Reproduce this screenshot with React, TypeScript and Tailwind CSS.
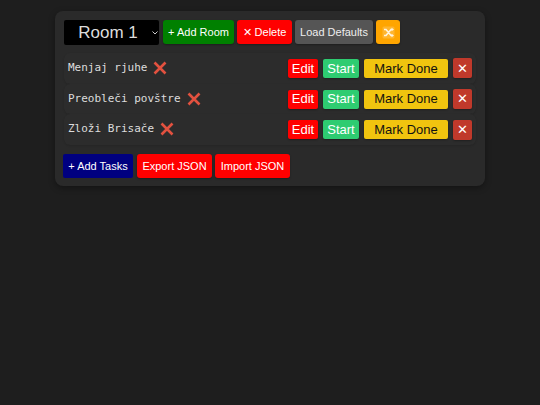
const tasks = ["Menjaj rjuhe", "Preobleči povštre", "Zloži Brisače"];

function RedCross() {
  return (
    <svg width="14" height="14" viewBox="0 0 14 14" className="mt-[-1px] shrink-0">
      <path d="M1.5 1.5 L12.5 12.5 M12.5 1.5 L1.5 12.5" stroke="#e2513f" strokeWidth="2.6" fill="none" />
    </svg>
  );
}

function ShuffleEmoji() {
  return (
    <svg width="13" height="13" viewBox="0 0 13 13">
      <rect x="0.5" y="0.5" width="12" height="12" rx="1.5" fill="#ffb52e" />
      <path d="M2 3.5 H4 L9 9.5 H10.5 M2 9.5 H4 L9 3.5 H10.5" stroke="#fff3dc" strokeWidth="1.7" fill="none" />
      <path d="M9.5 1.8 L12 3.5 L9.5 5.2 Z M9.5 7.8 L12 9.5 L9.5 11.2 Z" fill="#fff3dc" />
    </svg>
  );
}

function TaskRow({ name }: { name: string }) {
  return (
    <div className="flex h-[30.7px] items-center rounded-md bg-[#2c2c2c] pl-[4px] pr-[4px] shadow-[0_1px_2px_rgba(0,0,0,0.12)]">
      <div className="flex flex-1 items-center gap-[6px] font-['DejaVu_Sans_Mono',monospace] text-[11px] text-[#dddddd]">
        <span>{name}</span>
        <RedCross />
      </div>
      <div className="flex items-center gap-[5px] text-[13px]">
        <button className="flex h-[19px] w-[30px] items-center justify-center rounded-[2px] bg-[#ff0000] text-white shadow-[0_1px_2px_rgba(0,0,0,0.3)]">Edit</button>
        <button className="flex h-[19px] w-[36px] items-center justify-center rounded-[2px] bg-[#2ecc71] text-white shadow-[0_1px_2px_rgba(0,0,0,0.3)]">Start</button>
        <button className="flex h-[19px] w-[84px] items-center justify-center rounded-[2px] bg-[#f1c40f] text-[#111111] shadow-[0_1px_2px_rgba(0,0,0,0.3)]">Mark Done</button>
        <button className="flex h-[20px] w-[19px] items-center justify-center rounded-[2px] bg-[#c0392b] text-white shadow-[0_1px_2px_rgba(0,0,0,0.3)]">✕</button>
      </div>
    </div>
  );
}

export default function App() {
  return (
    <div className="min-h-[405px] bg-[#1e1e1e] pt-[11px] font-['Liberation_Sans',sans-serif]">
      <div className="mx-auto flex h-[175px] w-[430px] flex-col rounded-lg bg-[#2a2a2a] px-[9px] pt-[9px] shadow-[0_2px_6px_rgba(0,0,0,0.35)]">
        <div className="flex items-start gap-[3px] text-[11px]">
          <div className="relative mr-[1px] flex h-[25px] w-[95px] items-center justify-center rounded-[2px] bg-black pr-[7px] text-[17px] text-[#dddddd]">
            Room 1
            <svg width="6" height="4" viewBox="0 0 6 4" className="absolute right-[1.5px] top-[11px]">
              <path d="M0.5 0.5 L3 3 L5.5 0.5" stroke="#cccccc" strokeWidth="1" fill="none" />
            </svg>
          </div>
          <button className="h-[24px] w-[71px] rounded-[3px] bg-[#008000] text-white shadow-[0_1px_2px_rgba(0,0,0,0.3)]">+ Add Room</button>
          <button className="h-[24px] w-[55px] rounded-[3px] bg-[#ff0000] text-white shadow-[0_1px_2px_rgba(0,0,0,0.3)]">✕ Delete</button>
          <button className="h-[24px] w-[78px] rounded-[3px] bg-[#555555] text-[#eeeeee] shadow-[0_1px_2px_rgba(0,0,0,0.3)]">Load Defaults</button>
          <button className="flex h-[24px] w-[24px] items-center justify-center rounded-[3px] bg-[#ffa500] text-white shadow-[0_1px_2px_rgba(0,0,0,0.3)]">
            <ShuffleEmoji />
          </button>
        </div>
        <div className="mt-[8px] flex flex-col">
          {tasks.map((t) => (
            <TaskRow key={t} name={t} />
          ))}
        </div>
        <div className="ml-[-1px] mt-[9px] flex items-start gap-[3px] text-[11px] text-white">
          <button className="h-[24px] w-[70px] rounded-[2px] bg-[#000080]">+ Add Tasks</button>
          <button className="ml-[1px] h-[24px] w-[75px] rounded-[3px] bg-[#ff0000] shadow-[0_1px_2px_rgba(0,0,0,0.3)]">Export JSON</button>
          <button className="h-[24px] w-[75px] rounded-[3px] bg-[#ff0000] shadow-[0_1px_2px_rgba(0,0,0,0.3)]">Import JSON</button>
        </div>
      </div>
    </div>
  );
}
